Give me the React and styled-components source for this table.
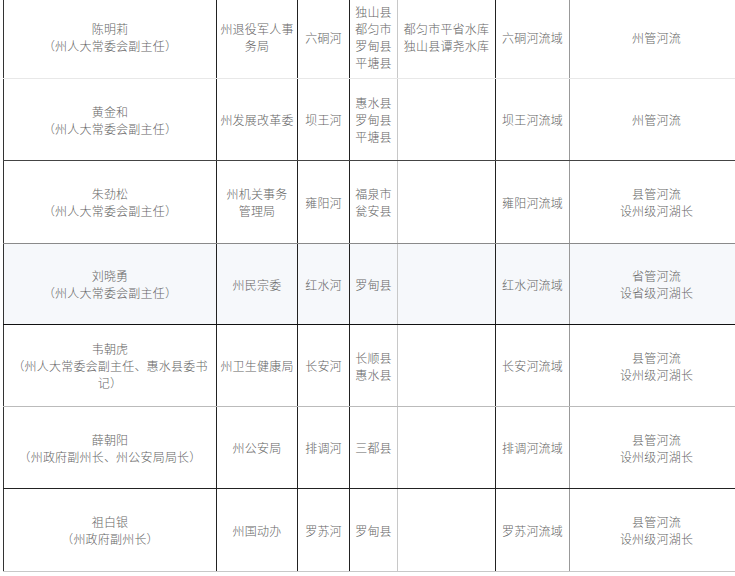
import React from "react";
import styled, { createGlobalStyle } from "styled-components";

const GlobalStyle = createGlobalStyle`
  html, body {
    margin: 0;
    padding: 0;
    background: #fff;
    overflow: hidden;
  }
  body {
    font-family: "Noto Sans CJK SC", "Noto Sans", sans-serif;
  }
`;

const Sheet = styled.div`
  width: 740px;
  margin-top: -4px;
  padding-left: 3px;
  font-size: 12px;
  line-height: 17px;
  letter-spacing: 0.2px;
  color: #666;
  font-weight: 300;
`;

const Row = styled.div`
  display: grid;
  grid-template-columns: 214px 81px 52px 48px 98px 74px 1fr;
  height: ${p => p.$height}px;
  background: ${p => (p.$shade ? "#f6f8fb" : "#fff")};
  border-bottom: 1px solid ${p => p.$line};
  box-sizing: border-box;
`;

const Cell = styled.div`
  display: flex;
  flex-direction: column;
  align-items: center;
  justify-content: center;
  text-align: center;
  box-sizing: border-box;
  border-right: 1px solid ${p => p.$edge || "#222"};
  white-space: nowrap;
  overflow: hidden;

  &:first-child {
    border-left: 1px solid #333;
  }
  &:last-child {
    border-right: none;
  }
`;

const Line = styled.span`
  display: block;
`;

const edges = ["#222", "#222", "#222", "#c8c8c8", "#222", "#999", "transparent"];

const rows = [
  {
    height: 83,
    line: "#e8e8e8",
    cells: [
      ["陈明莉", "（州人大常委会副主任）"],
      ["州退役军人事", "务局"],
      ["六硐河"],
      ["独山县", "都匀市", "罗甸县", "平塘县"],
      ["都匀市平省水库", "独山县谭尧水库"],
      ["六硐河流域"],
      ["州管河流"],
    ],
  },
  {
    height: 82,
    line: "#444",
    cells: [
      ["黄金和", "（州人大常委会副主任）"],
      ["州发展改革委"],
      ["坝王河"],
      ["惠水县", "罗甸县", "平塘县"],
      [],
      ["坝王河流域"],
      ["州管河流"],
    ],
  },
  {
    height: 83,
    line: "#8a8a8a",
    cells: [
      ["朱劲松", "（州人大常委会副主任）"],
      ["州机关事务", "管理局"],
      ["雍阳河"],
      ["福泉市", "瓮安县"],
      [],
      ["雍阳河流域"],
      ["县管河流", "设州级河湖长"],
    ],
  },
  {
    height: 81,
    line: "#111",
    shade: true,
    cells: [
      ["刘晓勇", "（州人大常委会副主任）"],
      ["州民宗委"],
      ["红水河"],
      ["罗甸县"],
      [],
      ["红水河流域"],
      ["省管河流", "设省级河湖长"],
    ],
  },
  {
    height: 82,
    line: "#bbb",
    cells: [
      ["韦朝虎", "（州人大常委会副主任、惠水县委书", "记）"],
      ["州卫生健康局"],
      ["长安河"],
      ["长顺县", "惠水县"],
      [],
      ["长安河流域"],
      ["县管河流", "设州级河湖长"],
    ],
  },
  {
    height: 82,
    line: "#222",
    cells: [
      ["薛朝阳", "（州政府副州长、州公安局局长）"],
      ["州公安局"],
      ["排调河"],
      ["三都县"],
      [],
      ["排调河流域"],
      ["县管河流", "设州级河湖长"],
    ],
  },
  {
    height: 83,
    line: "#c8c8c8",
    cells: [
      ["祖白银", "（州政府副州长）"],
      ["州国动办"],
      ["罗苏河"],
      ["罗甸县"],
      [],
      ["罗苏河流域"],
      ["县管河流", "设州级河湖长"],
    ],
  },
];

export default function App() {
  return (
    <>
      <GlobalStyle />
      <Sheet>
        {rows.map((row, i) => (
          <Row key={i} $height={row.height} $line={row.line} $shade={row.shade}>
            {row.cells.map((lines, j) => (
              <Cell key={j} $edge={edges[j]}>
                {lines.map((t, k) => (
                  <Line key={k}>{t}</Line>
                ))}
              </Cell>
            ))}
          </Row>
        ))}
      </Sheet>
    </>
  );
}
